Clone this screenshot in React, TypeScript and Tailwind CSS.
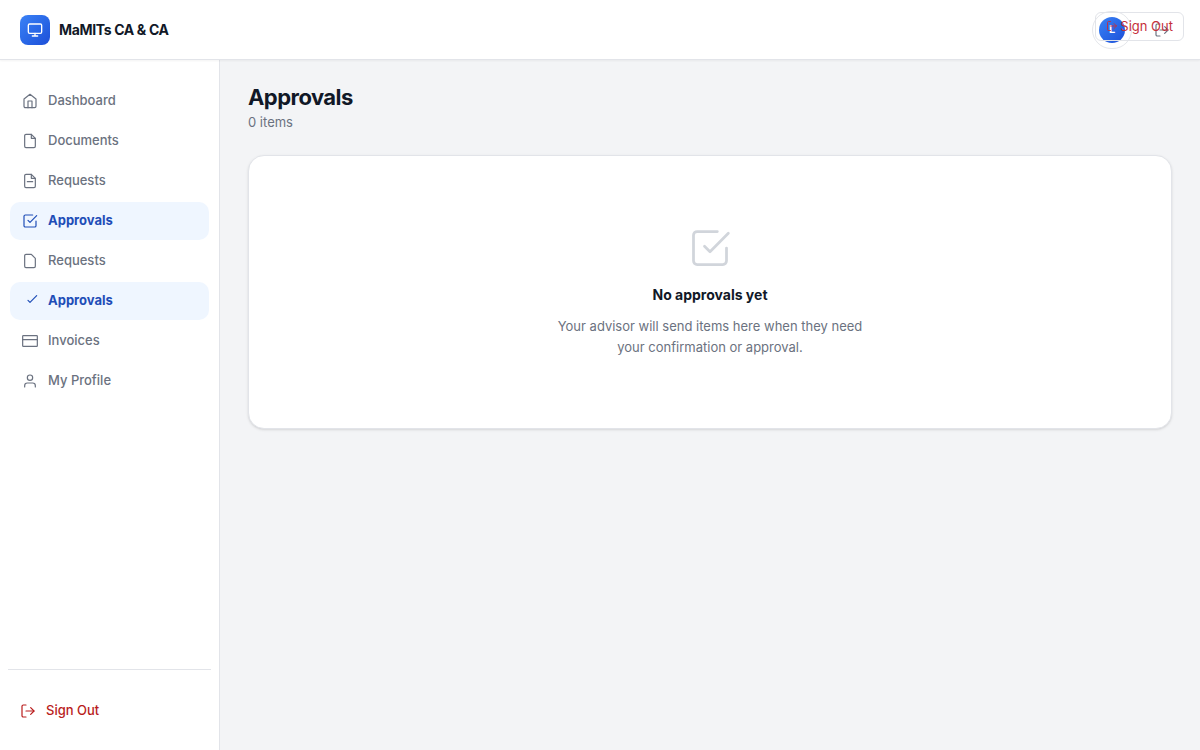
import type { ReactNode } from "react";

function Icon({ className, width = 1.8, children }: { className: string; width?: number; children: ReactNode }) {
  return (
    <svg
      viewBox="0 0 24 24"
      fill="none"
      stroke="currentColor"
      strokeWidth={width}
      strokeLinecap="round"
      strokeLinejoin="round"
      aria-hidden="true"
      className={`shrink-0 ${className}`}
    >
      {children}
    </svg>
  );
}

const checkMark = <path d="M9 11l3 3L22 4" />;
const checkBox = (
  <>
    {checkMark}
    <path d="M21 12v7a2 2 0 0 1-2 2H5a2 2 0 0 1-2-2V5a2 2 0 0 1 2-2h11" />
  </>
);
const logOut = (
  <>
    <path d="M9 21H5a2 2 0 0 1-2-2V5a2 2 0 0 1 2-2h4" />
    <path d="M16 17l5-5-5-5" />
    <path d="M21 12H9" />
  </>
);
const fileOutline = <path d="M14 2H6a2 2 0 0 0-2 2v16a2 2 0 0 0 2 2h12a2 2 0 0 0 2-2V8z" />;

const items: { label: string; icon: ReactNode; active?: boolean }[] = [
  {
    label: "Dashboard",
    icon: (
      <>
        <path d="M3 9l9-7 9 7v11a2 2 0 0 1-2 2H5a2 2 0 0 1-2-2z" />
        <path d="M9 22V12h6v10" />
      </>
    ),
  },
  {
    label: "Documents",
    icon: (
      <>
        {fileOutline}
        <path d="M14 2v6h6" />
      </>
    ),
  },
  {
    label: "Requests",
    icon: (
      <>
        {fileOutline}
        <path d="M14 2v6h6M8 13h8" />
      </>
    ),
  },
  { label: "Approvals", icon: checkBox, active: true },
  { label: "Requests", icon: fileOutline },
  { label: "Approvals", icon: checkMark, active: true },
  {
    label: "Invoices",
    icon: (
      <>
        <rect x="1" y="4" width="22" height="16" rx="1" />
        <path d="M1 10h22" />
      </>
    ),
  },
  {
    label: "My Profile",
    icon: (
      <>
        <path d="M20 21v-2a4 4 0 0 0-4-4H8a4 4 0 0 0-4 4v2" />
        <circle cx="12" cy="7" r="4" />
      </>
    ),
  },
];

function Header() {
  return (
    <header className="relative z-10 flex h-15 shrink-0 items-center justify-between border-b border-[#e2e4e9] bg-white px-5 shadow-xs">
      <div className="flex items-center gap-[9px]">
        <span className="flex size-[30px] items-center justify-center rounded-lg bg-linear-to-br from-[#3b82f6] to-[#1d4ed8] text-white">
          <Icon className="size-4" width={2}>
            <rect x="2" y="3" width="20" height="14" rx="2" />
            <path d="M8 21h8M12 17v4" />
          </Icon>
        </span>
        <span className="text-sm font-bold tracking-tight text-[#111827]">MaMITs CA &amp; CA</span>
      </div>
      <div className="flex items-center gap-3">
        <button
          type="button"
          aria-label="Account"
          className="flex h-[38px] w-10 items-center justify-center rounded-full border border-[#e5e7eb]"
        >
          <span className="flex size-[26px] items-center justify-center rounded-full bg-linear-to-br from-[#3b82f6] to-[#1d4ed8] text-[11px] font-bold text-white">
            L
          </span>
        </button>
        <button type="button" aria-label="Log out" className="flex size-9 items-center justify-center text-[#6b7280]">
          <Icon className="size-4">{logOut}</Icon>
        </button>
      </div>
      <button
        type="button"
        className="absolute top-3 right-4 flex items-center gap-0.5 rounded-md border border-[#e2e4e9] px-2.5 pt-1 pb-[5px] text-[13px] leading-[18px] text-[#c5303a]"
      >
        <Icon className="size-3">{logOut}</Icon>
        Sign Out
      </button>
    </header>
  );
}

function Sidebar() {
  return (
    <aside className="flex w-[220px] shrink-0 flex-col justify-between border-r border-[#e2e4e9] bg-white">
      <nav aria-label="Main" className="px-2.5 py-[22px]">
        <ul className="flex flex-col gap-0.5">
          {items.map((item, index) => (
            <li key={index}>
              <a
                href="#"
                aria-current={item.active ? "page" : undefined}
                className={`flex h-[38px] items-center gap-2.5 rounded-[10px] px-3 text-[13px] ${
                  item.active ? "bg-[#eff6ff] font-bold text-[#1e4db7]" : "font-medium text-[#6b7280]"
                }`}
              >
                <Icon className="size-4">{item.icon}</Icon>
                {item.label}
              </a>
            </li>
          ))}
        </ul>
      </nav>
      <div className="mx-2 border-t border-[#e2e4e9] px-3 pt-[21px] pb-[19px]">
        <button type="button" className="flex h-10 items-center gap-2.5 text-[13px] font-medium text-[#b91c1c]">
          <Icon className="size-4">{logOut}</Icon>
          Sign Out
        </button>
      </div>
    </aside>
  );
}

export default function App() {
  return (
    <div className="flex min-h-screen flex-col bg-[#f3f4f6] font-['Inter',sans-serif] text-[#111827]">
      <Header />
      <div className="flex grow">
        <Sidebar />
        <main className="min-w-0 grow px-7 py-6">
          <h1 className="text-[22px] leading-[26px] font-bold tracking-tight">Approvals</h1>
          <p className="text-[13px] leading-6 text-[#6b7280]">0 items</p>
          <section className="mt-[21px] flex flex-col items-center rounded-2xl border border-[#e2e4e9] bg-white px-6 py-[70px] text-center shadow-sm">
            <Icon className="size-11 text-[#d1d5db]" width={1.5}>
              {checkBox}
            </Icon>
            <h2 className="mt-[13px] text-sm leading-6 font-bold">No approvals yet</h2>
            <p className="mt-[9px] max-w-80 text-[13px] leading-[21px] text-[#6b7280]">
              Your advisor will send items here when they need your confirmation or approval.
            </p>
          </section>
        </main>
      </div>
    </div>
  );
}
